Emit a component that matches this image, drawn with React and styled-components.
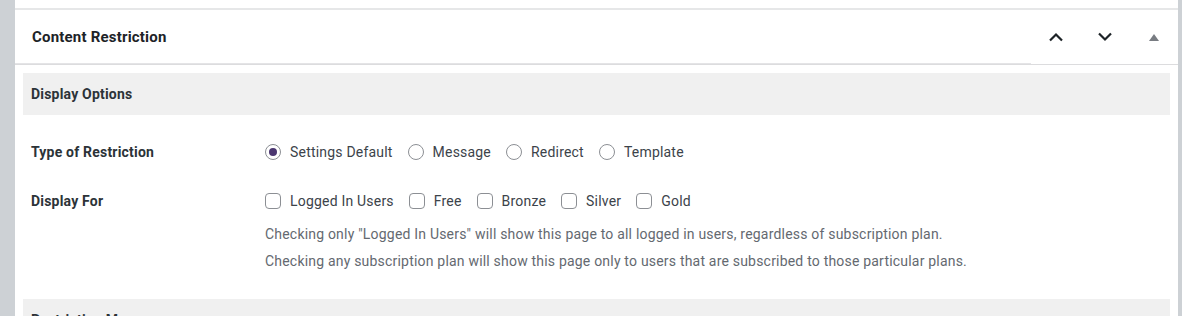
import React from 'react'
import styled, { createGlobalStyle } from 'styled-components'

const GlobalStyle = createGlobalStyle`
	body {
		margin: 0;
		background: #cdd1d5;
		font-family: Roboto, "Liberation Sans", sans-serif;
		font-size: 14px;
		letter-spacing: 0.2px;
		color: #3c434a;
	}
`

const Page = styled.div`
	height: 316px;
	overflow: hidden;
	padding: 0 4px 0 15px;
`

const Sheet = styled.div`
	background: #fff;
	height: 100%;
`

const PrevBox = styled.div`
	height: 8px;
	border-bottom: 2px solid #e6e7e8;
`

const Header = styled.div`
	display: flex;
	height: 54px;
	border-bottom: 1px solid #dcdcde;
`

const Title = styled.h2`
	flex: 1;
	margin: 0;
	padding-left: 17px;
	display: flex;
	align-items: center;
	font-size: 15px;
	font-weight: 700;
	color: #1d2327;
	box-shadow: inset 0 -1px 0 #e4e4e6;
`

const HandleButton = styled.button`
	width: 49px;
	border: 0;
	background: none;
	padding: 0;
	display: flex;
	align-items: center;
	justify-content: center;
	cursor: pointer;
	color: ${p => (p.$muted ? '#787c82' : '#1d2327')};
`

const Inside = styled.div`
	padding: 8px 8px 0;
`

const Band = styled.div`
	background: #f0f0f0;
	height: 42px;
	display: flex;
	align-items: center;
	padding-left: 8px;
	font-weight: 700;
	color: #2c3338;
`

const Form = styled.div`
	display: flex;
	flex-direction: column;
	gap: 23px;
	padding: 24px 0 24px;
`

const Row = styled.div`
	display: grid;
	grid-template-columns: 234px 1fr;
	padding-left: 8px;
`

const Label = styled.div`
	line-height: 26px;
	font-weight: 700;
	color: #2c3338;
`

const Options = styled.div`
	display: flex;
	align-items: center;
	height: 26px;
	gap: 15px;
`

const Option = styled.label`
	display: flex;
	align-items: center;
	gap: 9px;
	color: #3c434a;
`

const Radio = styled.span`
	width: 16px;
	height: 16px;
	box-sizing: border-box;
	border: 1px solid #8c8f94;
	border-radius: 50%;
	display: flex;
	align-items: center;
	justify-content: center;
	&::after {
		content: '';
		width: 8px;
		height: 8px;
		border-radius: 50%;
		background: ${p => (p.$checked ? '#4b3670' : 'transparent')};
	}
`

const Checkbox = styled.span`
	width: 16px;
	height: 16px;
	box-sizing: border-box;
	border: 1px solid #8c8f94;
	border-radius: 4px;
`

const Help = styled.div`
	margin-top: 7px;
	line-height: 27px;
	color: #646970;
`

const Chevron = ({ up }) => (
	<svg width="16" height="10" viewBox="0 0 16 10" fill="none">
		<path d={up ? 'M2 8.5L8 2.5L14 8.5' : 'M2 1.5L8 7.5L14 1.5'} stroke="currentColor" strokeWidth="2.2" />
	</svg>
)

const Triangle = () => (
	<svg width="10" height="7" viewBox="0 0 10 7">
		<path d="M5 0L10 7H0Z" fill="currentColor" />
	</svg>
)

const types = ['Settings Default', 'Message', 'Redirect', 'Template']
const plans = ['Logged In Users', 'Free', 'Bronze', 'Silver', 'Gold']

export default function App() {
	return (
		<>
			<GlobalStyle />
			<Page>
				<Sheet>
					<PrevBox />
					<Header>
						<Title>Content Restriction</Title>
						<HandleButton aria-label="Move up"><Chevron up /></HandleButton>
						<HandleButton aria-label="Move down"><Chevron /></HandleButton>
						<HandleButton $muted aria-label="Toggle panel"><Triangle /></HandleButton>
					</Header>
					<Inside>
						<Band>Display Options</Band>
						<Form>
							<Row>
								<Label>Type of Restriction</Label>
								<Options>
									{types.map((t, i) => (
										<Option key={t}><Radio $checked={i === 0} />{t}</Option>
									))}
								</Options>
							</Row>
							<Row>
								<Label>Display For</Label>
								<div>
									<Options>
										{plans.map(p => (
											<Option key={p}><Checkbox />{p}</Option>
										))}
									</Options>
									<Help>
										Checking only "Logged In Users" will show this page to all logged in users, regardless of subscription plan.
										<br />
										Checking any subscription plan will show this page only to users that are subscribed to those particular plans.
									</Help>
								</div>
							</Row>
						</Form>
						<Band>Restriction Messages</Band>
					</Inside>
				</Sheet>
			</Page>
		</>
	)
}
